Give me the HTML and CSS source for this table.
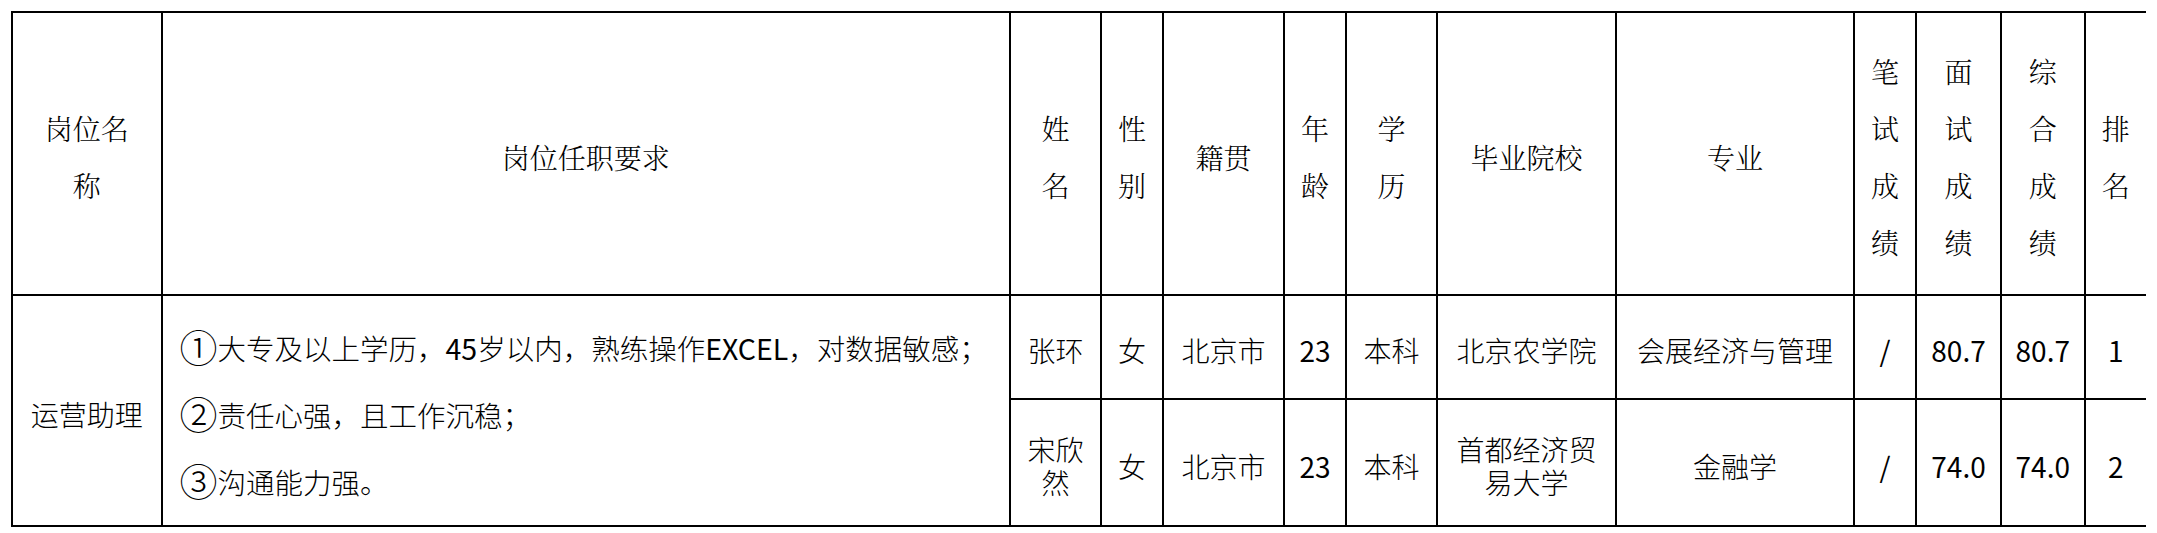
FILE: index.html
```html
<!DOCTYPE html>
<html lang="zh-CN">
<head>
<meta charset="utf-8">
<title>岗位</title>
<link rel="stylesheet" href="styles.css">
</head>
<body>
<table class="grid">
  <colgroup>
    <col class="c-post">
    <col class="c-req">
    <col class="c-name">
    <col class="c-sex">
    <col class="c-home">
    <col class="c-age">
    <col class="c-edu">
    <col class="c-school">
    <col class="c-major">
    <col class="c-s1">
    <col class="c-s2">
    <col class="c-s3">
    <col class="c-rank">
  </colgroup>
  <thead>
    <tr class="head-row">
      <th>岗位名<br>称</th>
      <th>岗位任职要求</th>
      <th>姓<br>名</th>
      <th>性<br>别</th>
      <th>籍贯</th>
      <th>年<br>龄</th>
      <th>学<br>历</th>
      <th>毕业院校</th>
      <th>专业</th>
      <th>笔<br>试<br>成<br>绩</th>
      <th>面<br>试<br>成<br>绩</th>
      <th>综<br>合<br>成<br>绩</th>
      <th>排<br>名</th>
    </tr>
  </thead>
  <tbody>
    <tr class="row-a">
      <td rowspan="2">运营助理</td>
      <td rowspan="2" class="req">
        <p><span class="num">①</span>大专及以上学历，<span class="lat">45</span>岁以内，熟练操作<span class="lat">EXCEL</span>，对数据敏感；</p>
        <p><span class="num">②</span>责任心强，且工作沉稳；</p>
        <p><span class="num">③</span>沟通能力强。</p>
      </td>
      <td>张环</td>
      <td>女</td>
      <td>北京市</td>
      <td class="n">23</td>
      <td>本科</td>
      <td>北京农学院</td>
      <td>会展经济与管理</td>
      <td class="n">/</td>
      <td class="n">80.7</td>
      <td class="n">80.7</td>
      <td class="n">1</td>
    </tr>
    <tr class="row-b">
      <td>宋欣<br>然</td>
      <td>女</td>
      <td>北京市</td>
      <td class="n">23</td>
      <td>本科</td>
      <td>首都经济贸<br>易大学</td>
      <td>金融学</td>
      <td class="n">/</td>
      <td class="n">74.0</td>
      <td class="n">74.0</td>
      <td class="n">2</td>
    </tr>
  </tbody>
</table>
</body>
</html>
```

FILE: styles.css
```css
html, body {
  background: #ffffff;
}
body {
  margin: 11px;
  color: #000000;
  font-family: "Noto Sans CJK SC", "Noto Sans", sans-serif;
}
.grid {
  border-collapse: collapse;
  table-layout: fixed;
  width: 2137px;
}
.grid th,
.grid td {
  border: 2px solid #000000;
  padding: 0 4px;
  text-align: center;
  vertical-align: middle;
  font-size: 28px;
}
.grid th {
  font-family: "Noto Serif CJK SC", "Noto Sans CJK SC", serif;
  font-weight: 300;
  line-height: 57px;
  padding-top: 7px;
}
.grid td {
  font-weight: 300;
  line-height: 33px;
  padding-top: 7px;
}
.grid td.n,
.req .lat {
  font-weight: 400;
}
.c-post { width: 149.5px; }
.c-req { width: 848.5px; }
.c-name { width: 91px; }
.c-sex { width: 62px; }
.c-home { width: 121px; }
.c-age { width: 62px; }
.c-edu { width: 91px; }
.c-school { width: 179px; }
.c-major { width: 238px; }
.c-s1 { width: 62px; }
.c-s2 { width: 85px; }
.c-s3 { width: 83.5px; }
.c-rank { width: 62.5px; }
.head-row { height: 283px; }
.row-a { height: 104px; }
.row-b { height: 127px; }
.grid td.req {
  text-align: left;
  padding-left: 17px;
  font-size: 28.5px;
}
.req p {
  margin: 0;
}
.req p + p {
  margin-top: 34px;
}
.req .num {
  font-size: 38px;
  line-height: 1px;
  vertical-align: -2px;
}
```
